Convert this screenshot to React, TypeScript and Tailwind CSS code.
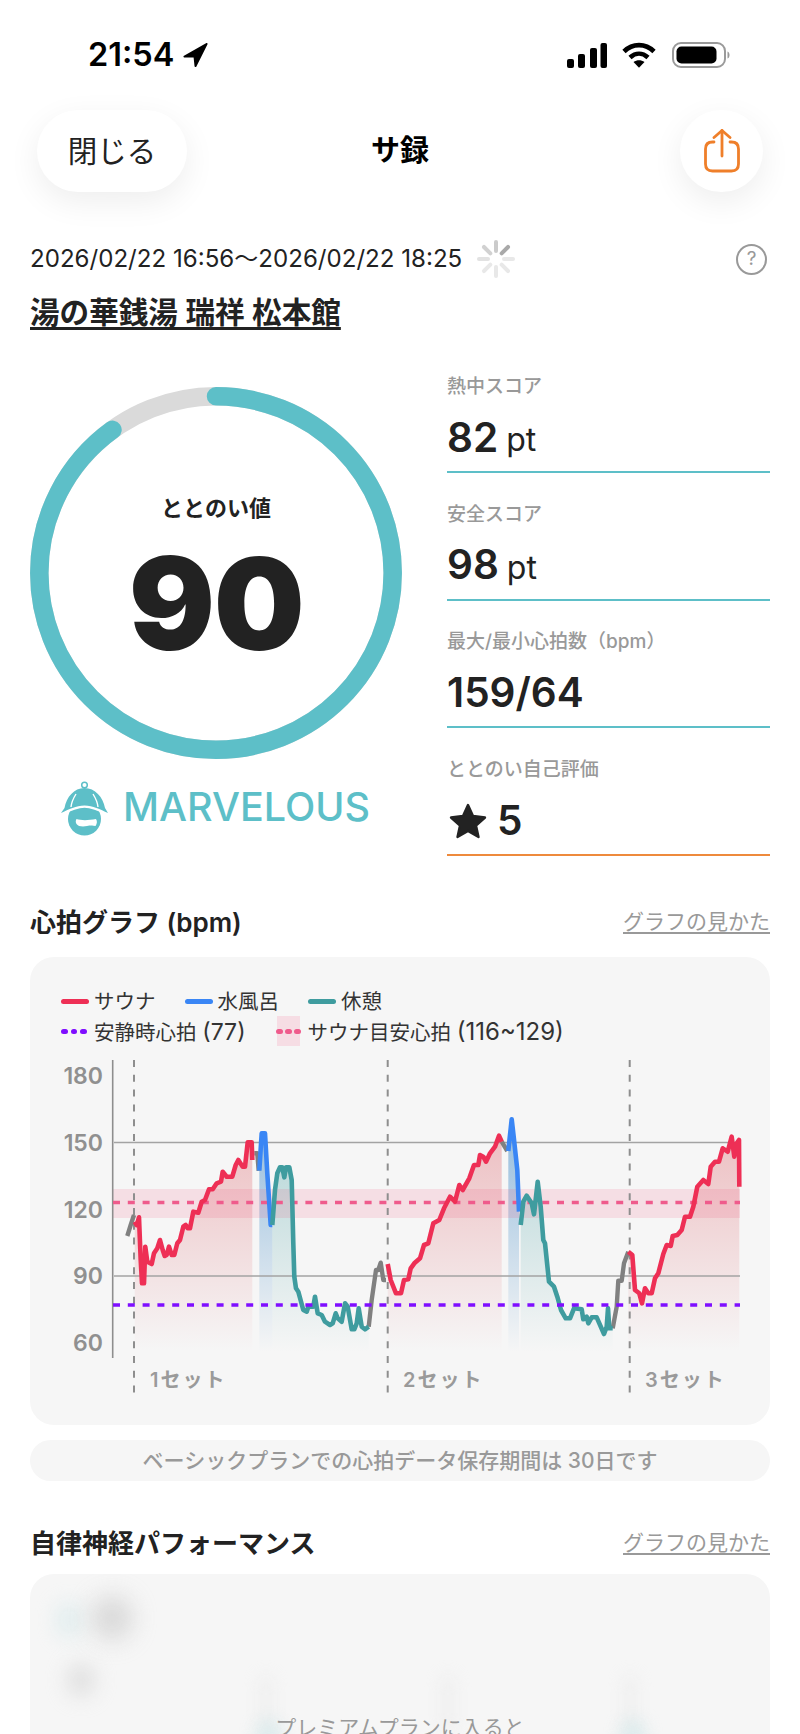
type Pt = [number, number];

// traced from the reference, in 3x crop coordinates
const L = (pts: number[][]): Pt[] => pts.map(([x, y]) => [20 + x / 3, 960 + y / 3]);
const R = (pts: number[][]): Pt[] => pts.map(([x, y]) => [400 + x / 3, 960 + y / 3]);

const gray1 = L([[322, 828], [332, 795], [342, 765]]);
const red1 = L([[344, 785], [350, 795], [357, 772], [362, 900], [366, 970], [372, 970], [376, 860], [382, 905], [395, 912], [402, 880], [412, 865], [420, 840], [428, 870], [434, 888], [440, 885], [447, 860], [455, 885], [463, 885], [472, 850], [480, 840], [490, 800], [497, 795], [503, 805], [510, 805], [520, 755], [535, 758], [545, 725], [555, 720], [567, 688], [578, 688], [590, 670], [603, 665], [608, 635], [620, 650], [637, 650], [647, 615], [655, 600], [668, 620], [675, 620], [683, 547], [695, 547], [697, 600]]);
const gray2 = L([[703, 580], [712, 580], [716, 632]]);
const blue1 = L([[718, 632], [725, 520], [735, 520], [742, 640], [752, 795], [757, 795]]);
const teal1 = L([[757, 795], [765, 690], [772, 640], [780, 622], [787, 622], [793, 652], [798, 622], [808, 622], [815, 660], [820, 850], [823, 950], [828, 985], [835, 995], [850, 1050], [860, 1055], [865, 1040], [880, 1040], [885, 1010], [893, 1060], [905, 1065], [915, 1085], [930, 1095], [938, 1090], [947, 1060], [953, 1075], [965, 1085], [975, 1030], [983, 1040], [995, 1108], [1003, 1108], [1010, 1090], [1016, 1045], [1025, 1100], [1035, 1108], [1046, 1100]]);
const gray3 = L([[1046, 1100], [1055, 1020], [1068, 930], [1075, 930], [1082, 908], [1090, 960], [1098, 960]]);
const red2 = [
  ...L([[1103, 912], [1112, 960], [1128, 1000], [1143, 1000]]),
  ...R([[12, 960], [25, 958], [32, 925], [43, 910], [60, 895], [72, 855], [85, 850], [100, 790], [118, 780], [132, 745], [150, 710], [165, 725], [178, 675], [188, 690], [208, 655], [222, 615], [235, 615], [240, 585], [250, 590], [258, 605], [270, 580], [285, 560], [297, 527], [305, 545]]),
];
const gray4 = R([[305, 545], [322, 573]]);
const blue2 = R([[325, 573], [335, 478], [340, 520], [352, 630], [357, 755]]);
const teal2 = R([[362, 795], [370, 725], [380, 707], [395, 730], [402, 763], [413, 665], [422, 740], [430, 840], [435, 850], [447, 965], [462, 980], [472, 1010], [483, 1050], [497, 1075], [510, 1075], [522, 1045], [545, 1048], [550, 1078], [560, 1070], [565, 1090], [575, 1072], [590, 1072], [612, 1122], [620, 1100], [624, 1045], [628, 1105], [638, 1105]]);
const gray5 = R([[638, 1105], [650, 1040], [655, 962], [665, 962], [672, 910], [685, 875]]);
const red3 = R([[685, 875], [697, 885], [705, 990], [718, 1000], [726, 1030], [735, 985], [745, 1000], [755, 1000], [765, 955], [775, 940], [790, 882], [800, 855], [812, 858], [818, 828], [832, 825], [845, 810], [855, 770], [870, 770], [880, 740], [892, 680], [910, 660], [925, 672], [932, 620], [945, 605], [957, 605], [968, 565], [983, 575], [995, 530], [1003, 590], [1010, 550], [1017, 540], [1018, 680]]);

const line = (pts: Pt[]) => pts.map(([x, y]) => `${x.toFixed(1)},${y.toFixed(1)}`).join(" ");
const area = (pts: Pt[]) =>
  `${pts[0][0].toFixed(1)},1352 ${line(pts)} ${pts[pts.length - 1][0].toFixed(1)},1352`;

const yTicks = [
  { label: "180", y: 1076 },
  { label: "150", y: 1143 },
  { label: "120", y: 1210 },
  { label: "90", y: 1276 },
  { label: "60", y: 1343 },
];
const sets = [
  { label: "1セット", x: 150 },
  { label: "2セット", x: 403 },
  { label: "3セット", x: 645 },
];
const stats = [
  { label: "熱中スコア", value: "82", unit: "pt" },
  { label: "安全スコア", value: "98", unit: "pt" },
  { label: "最大/最小心拍数（bpm）", value: "159/64" },
];

function StatusBar() {
  return (
    <div className="flex h-[110px] items-center justify-between pl-[88px] pr-[70px]">
      <div className="flex items-center gap-[9px]">
        <span className="text-[32.5px] font-semibold leading-none text-black">21:54</span>
        <svg width="25" height="24" viewBox="0 0 25 24" className="-mt-[1px]">
          <path d="M23.5 1 L1.5 13.5 L11.5 13.5 L12.5 23 Z" fill="#000" stroke="#000" strokeWidth="2" strokeLinejoin="round" />
        </svg>
      </div>
      <div className="flex items-center">
        <svg width="40" height="25" viewBox="0 0 40 25" className="mr-[15px]">
          <rect x="0" y="16" width="7" height="9" rx="2" fill="#000" />
          <rect x="11" y="11" width="7" height="14" rx="2" fill="#000" />
          <rect x="23" y="5" width="7" height="20" rx="2" fill="#000" />
          <rect x="33.5" y="0" width="6.5" height="25" rx="2" fill="#000" />
        </svg>
        <svg width="34" height="26" viewBox="0 0 34 26" className="mr-[16px]">
          <path d="M2 9.5 C10.5 1 23.5 1 32 9.5" fill="none" stroke="#000" strokeWidth="4.6" strokeLinecap="butt" />
          <path d="M8 15.5 C13.5 10.5 20.5 10.5 26 15.5" fill="none" stroke="#000" strokeWidth="4.6" strokeLinecap="butt" />
          <path d="M11.5 20 C15 17.5 19 17.5 22.5 20 L17 25.8 Z" fill="#000" />
        </svg>
        <svg width="58" height="26" viewBox="0 0 58 26">
          <rect x="1" y="1" width="52" height="24" rx="8" fill="none" stroke="#9a9a9a" strokeWidth="2" />
          <rect x="4.5" y="4.5" width="40" height="17" rx="5" fill="#000" />
          <path d="M55.5 9.5 C57 10 57.5 11.5 57.5 13 C57.5 14.5 57 16 55.5 16.5 Z" fill="#9a9a9a" />
        </svg>
      </div>
    </div>
  );
}

function Header() {
  return (
    <div className="grid grid-cols-[1fr_auto_1fr] items-center px-[37px]">
      <button className="flex h-[82px] w-[150px] items-center justify-center rounded-full bg-white text-[29.5px] text-[#222] shadow-[0_10px_32px_rgba(0,0,0,0.07)]">
        閉じる
      </button>
      <div className="text-[29px] font-bold text-black">サ録</div>
      <button className="flex h-[82px] w-[83px] items-center justify-center justify-self-end rounded-full bg-white shadow-[0_10px_32px_rgba(0,0,0,0.07)]">
        <svg width="36" height="44" viewBox="0 0 36 44" fill="none" stroke="#ef7f2a" strokeWidth="2.8" strokeLinecap="round" strokeLinejoin="round">
          <path d="M10 13 H8.5 C4 13 1.5 15.5 1.5 20 V35 C1.5 39.5 4 42 8.5 42 H27.5 C32 42 34.5 39.5 34.5 35 V20 C34.5 15.5 32 13 27.5 13 H26" />
          <path d="M18 27 V1.5" />
          <path d="M10 8.5 L18 1.5 L26 8.5" />
        </svg>
      </button>
    </div>
  );
}

function Spinner() {
  const spokes = [
    { a: 0, o: 0.45 },
    { a: 45, o: 0.75 },
    { a: 90, o: 0.2 },
    { a: 135, o: 0.2 },
    { a: 180, o: 0.2 },
    { a: 225, o: 0.2 },
    { a: 270, o: 0.25 },
    { a: 315, o: 0.4 },
  ];
  return (
    <svg width="38" height="38" viewBox="-19 -19 38 38">
      {spokes.map((s) => (
        <line key={s.a} x1="0" y1="-8" x2="0" y2="-17" stroke="#8c8c8c" strokeOpacity={s.o} strokeWidth="4" strokeLinecap="round" transform={`rotate(${s.a})`} />
      ))}
    </svg>
  );
}

function Ring() {
  const r = 176.7;
  const c = 2 * Math.PI * r;
  return (
    <div className="relative h-[372px] w-[372px]">
      <svg width="372" height="372" viewBox="0 0 372 372">
        <circle cx="186" cy="186" r={r} fill="none" stroke="#dadada" strokeWidth="18.5" />
        <circle cx="186" cy="186" r={r} fill="none" stroke="#5dbfc8" strokeWidth="18.5" strokeLinecap="round" strokeDasharray={`${c * 0.9} ${c}`} transform="rotate(-90 186 186)" />
      </svg>
      <div className="absolute inset-0 flex flex-col items-center">
        <div className="mt-[104px] text-[22px] font-semibold leading-[34px] text-[#222]">ととのい値</div>
        <div className="mt-[14px] text-[128px] font-black leading-[130px] tracking-[-1.5px] text-[#222]">90</div>
      </div>
    </div>
  );
}

function HatLogo() {
  return (
    <svg width="60" height="65" viewBox="0 0 60 65">
      <circle cx="30.5" cy="8" r="2.8" fill="none" stroke="#5dbfc8" strokeWidth="1.5" />
      <circle cx="30.5" cy="42" r="16.5" fill="#5dbfc8" />
      <path d="M6 37 C14 33 22 29 30.5 29 C39 29 47 33 55 37" fill="none" stroke="#fff" strokeWidth="3.5" />
      <path d="M30.5 11 C20 11 12.5 20 10.5 31 L7 36 C15 32.5 22 28.5 30.5 28.5 C39 28.5 46 32.5 54 36 L51 31 C49 20 41 11 30.5 11 Z" fill="#5dbfc8" />
      <path d="M22 17 C19.5 21 17.5 25 17 30" fill="none" stroke="#fff" strokeWidth="1.4" />
      <path d="M39 17 C41.5 21 43.5 25 44 30" fill="none" stroke="#fff" strokeWidth="1.4" />
      <path d="M22.5 42 C27 43.5 34 43.5 42 42 C43.5 44 43 47 41.5 49 C36 48.5 35 48 33 49 C29 50 24 49.5 22.5 47 C21.5 45.5 21.5 43.5 22.5 42 Z" fill="#fff" />
    </svg>
  );
}

function Stat({ label, children, accent = "border-[#5dbfc8]" }: { label: string; children: React.ReactNode; accent?: string }) {
  return (
    <div className={`h-[100px] border-b-2 ${accent}`}>
      <div className="text-[19px] font-medium leading-[28px] text-[#999]">{label}</div>
      <div className="mt-[12px] flex h-[50px] items-center text-[#222]">{children}</div>
    </div>
  );
}

function SectionTitle({ title }: { title: string }) {
  return (
    <div className="flex h-[36px] items-center justify-between pl-[30px] pr-[30px]">
      <h2 className="text-[26px] font-semibold text-[#222]">{title}</h2>
      <a className="text-[21px] text-[#999] underline underline-offset-[3px]">グラフの見かた</a>
    </div>
  );
}

function Legend() {
  const swatches = [
    { label: "サウナ", color: "bg-[#ee2f55]" },
    { label: "水風呂", color: "bg-[#3a86f5]" },
    { label: "休憩", color: "bg-[#3f9c9f]" },
  ];
  return (
    <div className="h-[90px] pl-[31px] pt-[30px] text-[20.5px] leading-[30px] text-[#333]">
      <div className="flex h-[30px] gap-[29px]">
        {swatches.map((s) => (
          <div key={s.label} className="flex items-center gap-[5px]">
            <span className={`-mt-[2px] h-[5px] w-[28px] rounded-full ${s.color}`} />
            {s.label}
          </div>
        ))}
      </div>
      <div className="flex h-[30px] gap-[31px]">
        <div className="flex items-center gap-[7px]">
          <span className="-mt-[2px] flex w-[26px] gap-[3px]">
            <i className="h-[5px] w-[7px] rounded-full bg-[#7f0eff]" />
            <i className="h-[5px] w-[7px] rounded-full bg-[#7f0eff]" />
            <i className="h-[5px] w-[7px] rounded-full bg-[#7f0eff]" />
          </span>
          <span>安静時心拍 <span className="text-[23px]">(77)</span></span>
        </div>
        <div className="flex items-center gap-[8px]">
          <span className="-mt-[2px] flex h-[30px] w-[23px] items-center justify-center gap-[2px] bg-[#f6dde4]">
            <i className="h-[5px] w-[7px] shrink-0 rounded-full bg-[#ef5b8c]" />
            <i className="h-[5px] w-[7px] shrink-0 rounded-full bg-[#ef5b8c]" />
            <i className="h-[5px] w-[7px] shrink-0 rounded-full bg-[#ef5b8c]" />
          </span>
          <span>サウナ目安心拍 <span className="text-[24px]">(116~129)</span></span>
        </div>
      </div>
    </div>
  );
}

function HeartChart() {
  return (
    <svg width="740" height="378" viewBox="30 1047 740 378" className="block">
      <defs>
        <linearGradient id="fillRed" gradientUnits="userSpaceOnUse" x1="0" y1="1130" x2="0" y2="1352">
          <stop offset="0" stopColor="#d73c46" stopOpacity="0.3" />
          <stop offset="1" stopColor="#d73c46" stopOpacity="0" />
        </linearGradient>
        <linearGradient id="fillBlue" gradientUnits="userSpaceOnUse" x1="0" y1="1130" x2="0" y2="1352">
          <stop offset="0" stopColor="#3a86c5" stopOpacity="0.5" />
          <stop offset="1" stopColor="#3a86c5" stopOpacity="0" />
        </linearGradient>
        <linearGradient id="fillTeal" gradientUnits="userSpaceOnUse" x1="0" y1="1130" x2="0" y2="1352">
          <stop offset="0" stopColor="#3f9c9f" stopOpacity="0.36" />
          <stop offset="1" stopColor="#3f9c9f" stopOpacity="0" />
        </linearGradient>
      </defs>

      {[red1, red2, red3].map((p, i) => <polygon key={i} points={area(p)} fill="url(#fillRed)" />)}
      {[blue1, blue2].map((p, i) => <polygon key={i} points={area(p)} fill="url(#fillBlue)" />)}
      {[teal1, teal2].map((p, i) => <polygon key={i} points={area(p)} fill="url(#fillTeal)" />)}

      <rect x="113" y="1189" width="627" height="29" fill="#ee3f6e" fillOpacity="0.13" />
      <line x1="114" y1="1142.5" x2="740" y2="1142.5" stroke="#a3a3a3" strokeWidth="1.6" />
      <line x1="114" y1="1276" x2="740" y2="1276" stroke="#a3a3a3" strokeWidth="1.6" />
      <line x1="112.7" y1="1060" x2="112.7" y2="1358" stroke="#8e8e8e" strokeWidth="1.6" />

      {[134, 387.7, 629.7].map((x) => (
        <line key={x} x1={x} y1="1060" x2={x} y2="1396" stroke="#8e8e8e" strokeWidth="2" strokeDasharray="7 7.8" />
      ))}
      <line x1="113" y1="1202.5" x2="740" y2="1202.5" stroke="#ef5b8c" strokeWidth="3.6" strokeDasharray="7 7.8" />

      {[gray1, gray2, gray3, gray4, gray5].map((p, i) => (
        <polyline key={i} points={line(p)} fill="none" stroke="#808080" strokeWidth="4.4" strokeLinejoin="round" />
      ))}
      {[red1, red2, red3].map((p, i) => (
        <polyline key={i} points={line(p)} fill="none" stroke="#ee2f55" strokeWidth="4.6" strokeLinejoin="round" />
      ))}
      {[blue1, blue2].map((p, i) => (
        <polyline key={i} points={line(p)} fill="none" stroke="#3a86f5" strokeWidth="4.6" strokeLinejoin="round" />
      ))}
      {[teal1, teal2].map((p, i) => (
        <polyline key={i} points={line(p)} fill="none" stroke="#3f9c9f" strokeWidth="4.6" strokeLinejoin="round" />
      ))}
      <line x1="113" y1="1305" x2="740" y2="1305" stroke="#7f0eff" strokeWidth="3.6" strokeDasharray="7 7.8" />

      {yTicks.map((t) => (
        <text key={t.label} x="103" y={t.y + 8} textAnchor="end" fontSize="23" fontWeight="600" fill="#909090">
          {t.label}
        </text>
      ))}
      {sets.map((s) => (
        <text key={s.label} x={s.x} y="1387" fontSize="20" fontWeight="600" letterSpacing="2" fill="#9a9a9a">
          {s.label}
        </text>
      ))}
    </svg>
  );
}

export default function App() {
  return (
    <div className="h-[1734px] w-[800px] overflow-hidden bg-white font-['Inter','Noto_Sans_CJK_JP',sans-serif]">
      <StatusBar />
      <Header />

      <div className="mt-[47px] flex h-[40px] items-center pl-[30px] pr-[33px]">
        <span className="text-[24.1px] text-[#222]">2026/02/22 16:56～2026/02/22 18:25</span>
        <span className="ml-[15px]"><Spinner /></span>
        <span className="ml-auto flex h-[31px] w-[31px] items-center justify-center rounded-full border-2 border-[#999] text-[19px] text-[#999]">?</span>
      </div>
      <div className="mt-[15px] pl-[30px] text-[29.6px] font-semibold leading-[36px] text-[#222] underline decoration-[2.5px] underline-offset-[4px]">
        湯の華銭湯 瑞祥 松本館
      </div>

      <div className="mt-[43px] flex items-start px-[30px]">
        <div className="w-[372px] pt-[14px]">
          <Ring />
          <div className="mt-[18px] flex items-center justify-center gap-[9px] pr-[8px]">
            <HatLogo />
            <span className="-mt-[5px] text-[39.5px] font-medium leading-[52px] text-[#5dbfc8]">MARVELOUS</span>
          </div>
        </div>
        <div className="ml-[45px] flex w-[323px] flex-col gap-[27.7px]">
          {stats.map((s) => (
            <Stat key={s.label} label={s.label}>
              <span className="text-[40.5px] font-semibold leading-none">{s.value}</span>
              {s.unit && <span className="ml-[8px] mt-[4px] text-[32px] leading-none">{s.unit}</span>}
            </Stat>
          ))}
          <Stat label="ととのい自己評価" accent="border-[#ee8a3c]">
            <svg width="38" height="36" viewBox="0 0 38 36" className="ml-[2px]">
              <path d="M19 2 L24 13 L36 14.5 L27 22.5 L29.5 34 L19 28 L8.5 34 L11 22.5 L2 14.5 L14 13 Z" fill="#222" stroke="#222" strokeWidth="2.4" strokeLinejoin="round" />
            </svg>
            <span className="ml-[10px] text-[40.5px] font-semibold leading-none">5</span>
          </Stat>
        </div>
      </div>

      <div className="mt-[48px]">
        <SectionTitle title="心拍グラフ (bpm)" />
      </div>
      <div className="mx-[30px] mt-[17px] h-[468px] overflow-hidden rounded-[24px] bg-[#f6f6f6]">
        <Legend />
        <HeartChart />
      </div>
      <div className="mx-[30px] mt-[15px] flex h-[41px] items-center justify-center rounded-full bg-[#f6f6f6] text-[21px] font-medium text-[#999]">
        ベーシックプランでの心拍データ保存期間は 30日です
      </div>

      <div className="mt-[44px]">
        <SectionTitle title="自律神経パフォーマンス" />
      </div>
      <div className="relative mx-[30px] mt-[13px] h-[300px] overflow-hidden rounded-[24px] bg-[#f6f6f6]">
        <div className="absolute left-[26px] top-[28px] h-[36px] w-[26px] rounded-full bg-[#cfe6e8] opacity-50 blur-[10px]" />
        <div className="absolute left-[62px] top-[22px] h-[44px] w-[40px] rounded-full bg-[#c4c4c4] opacity-60 blur-[12px]" />
        <div className="absolute left-[36px] top-[88px] h-[36px] w-[30px] rounded-full bg-[#cfcfcf] opacity-50 blur-[10px]" />
        <div className="absolute left-[228px] top-[100px] h-[60px] w-[16px] rounded-full bg-[#e4e4e4] opacity-30 blur-[8px]" />
        <div className="absolute left-[410px] top-[100px] h-[60px] w-[16px] rounded-full bg-[#e4e4e4] opacity-30 blur-[8px]" />
        <div className="absolute left-[592px] top-[100px] h-[60px] w-[16px] rounded-full bg-[#e4e4e4] opacity-30 blur-[8px]" />
        <div className="absolute left-[590px] top-[145px] h-[40px] w-[26px] rounded-full bg-[#cfe6e8] opacity-60 blur-[8px]" />
        <div className="absolute left-[226px] top-[145px] h-[40px] w-[26px] rounded-full bg-[#cfe6e8] opacity-60 blur-[8px]" />
        <div className="relative pt-[138px] text-center text-[21px] leading-[32px] text-[#999]">プレミアムプランに入ると</div>
      </div>
    </div>
  );
}
